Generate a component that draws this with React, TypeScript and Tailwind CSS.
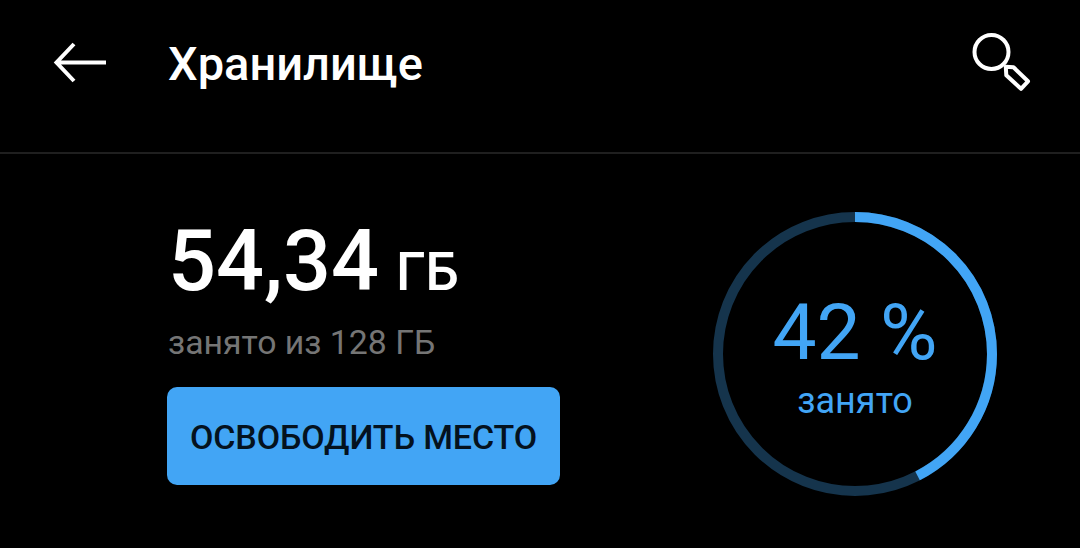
const USED_GB = 54.34;
const TOTAL_GB = 128;

const RING_SIZE = 284;
const RING_STROKE = 10;

function BackIcon() {
  return (
    <svg width="54" height="42" viewBox="0 0 54 42" fill="none" stroke="currentColor" strokeWidth="4">
      <path d="M21 2 3.5 20.5 21 39M4 20.5h49" />
    </svg>
  );
}

function SearchIcon() {
  return (
    <svg width="60" height="60" viewBox="0 0 60 60" fill="none" stroke="currentColor" strokeWidth="4">
      <circle cx="20.5" cy="19" r="17" />
      <path d="M34.8 33.8 42.5 34.3 57 48.3 50 55.8 35.3 42.3Z" strokeLinejoin="round" />
    </svg>
  );
}

function UsageRing({ ratio }: { ratio: number }) {
  const center = RING_SIZE / 2;
  const radius = (RING_SIZE - RING_STROKE) / 2;

  return (
    <div className="relative size-[284px]">
      <svg width={RING_SIZE} height={RING_SIZE} className="-rotate-90" fill="none" strokeWidth={RING_STROKE}>
        <circle cx={center} cy={center} r={radius} stroke="#15344c" />
        <circle
          cx={center}
          cy={center}
          r={radius}
          stroke="#42a5f5"
          pathLength={100}
          strokeDasharray={`${ratio * 100} 100`}
        />
      </svg>
      <div className="absolute inset-0 flex flex-col items-center pt-20 text-[#42a5f5]">
        <span className="text-[78.5px] leading-20 whitespace-nowrap">{Math.floor(ratio * 100)} %</span>
        <span className="mt-[9px] text-[36px] leading-10">занято</span>
      </div>
    </div>
  );
}

export default function App() {
  return (
    <div className="h-[548px] w-[1080px] overflow-hidden bg-black font-[Roboto,sans-serif] text-white">
      <header className="flex h-[154px] items-center border-b-2 border-[#1f1f1f] pr-[49px] pb-[26px] pl-[53px]">
        <button type="button" aria-label="Назад">
          <BackIcon />
        </button>
        <h1 className="ml-[61px] pt-0.5 text-[47px] leading-14 font-medium">Хранилище</h1>
        <button type="button" aria-label="Поиск" className="ml-auto">
          <SearchIcon />
        </button>
      </header>

      <main className="flex justify-between pr-[83px] pl-[167px]">
        <section className="flex flex-col items-start pt-[66px]">
          <p className="flex items-baseline gap-[17px] pl-px text-[84.5px] leading-[84px] font-medium">
            {USED_GB.toLocaleString("ru-RU")}
            <span className="text-[53px] leading-none">ГБ</span>
          </p>
          <p className="mt-[19px] pl-px text-[33.8px] leading-10 text-[#757575]">занято из {TOTAL_GB} ГБ</p>
          <button
            type="button"
            className="mt-6 h-[98px] w-[393px] rounded-[10px] bg-[#42a5f5] pt-0.5 text-[34px] font-medium tracking-[-0.1px] whitespace-nowrap text-[#04121f]"
          >
            ОСВОБОДИТЬ МЕСТО
          </button>
        </section>

        <div className="pt-[58px]">
          <UsageRing ratio={USED_GB / TOTAL_GB} />
        </div>
      </main>
    </div>
  );
}
